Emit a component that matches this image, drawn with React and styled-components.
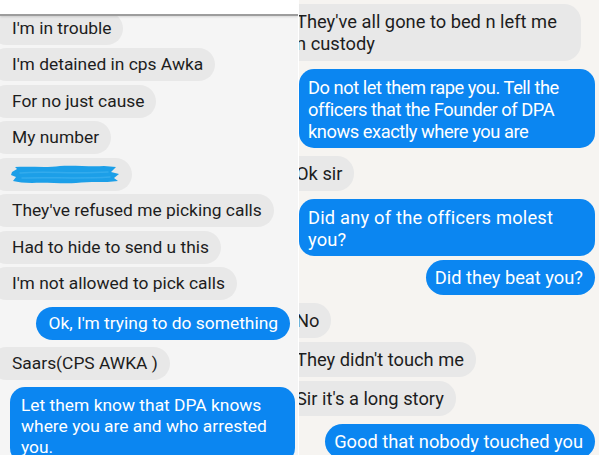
import React from "react";
import styled, { createGlobalStyle, css } from "styled-components";

const GlobalStyle = createGlobalStyle`
  html, body { margin: 0; padding: 0; background: #ffffff; }
  body { font-family: Roboto, "Noto Sans", "Liberation Sans", sans-serif; -webkit-font-smoothing: antialiased; }
`;

const Collage = styled.div`
  display: flex;
  gap: 1px;
  width: 599px;
  height: 462px;
  background: #ffffff;
  align-items: flex-start;
`;

const Shot = styled.section`
  display: flex;
  flex-direction: column;
  overflow: hidden;
  height: 455px;
  width: ${(p) => p.$width}px;
  background: ${(p) => p.$bg};
`;

const TopStrip = styled.div`
  flex: none;
  height: 14px;
  background: #ffffff;
  border-bottom: 2px solid #9d9d9d;
  box-shadow: 0 1px 2px rgba(0, 0, 0, 0.12);
  position: relative;
  z-index: 1;
`;

const Thread = styled.div`
  flex: 1;
  display: flex;
  flex-direction: column;
  overflow: hidden;
  padding-top: ${(p) => p.$top}px;
  margin-top: ${(p) => p.$shift || 0}px;
`;

const Bubble = styled.div`
  flex: none;
  box-sizing: border-box;
  font-size: ${(p) => (p.$big ? 18.3 : 17.4)}px;
  line-height: ${(p) => (p.$big ? 22 : 21)}px;
  letter-spacing: ${(p) => (p.$tight ? -0.45 : p.$loose ? 0.2 : 0)}px;
  font-variant-ligatures: none;
  padding: ${(p) => (p.$big ? 6.5 : 6)}px 12px;
  margin-top: ${(p) => (p.$first ? 0 : p.$switch ? (p.$big ? 8 : 7) : p.$big ? 4 : 3.5)}px;
  border-radius: 17px;
  white-space: nowrap;
  ${(p) =>
    p.$mine
      ? css`
          align-self: ${p.$wide ? "stretch" : "flex-end"};
          background: #0b86f1;
          color: #ffffff;
          margin-right: ${p.$edgeRight}px;
          margin-left: ${p.$wide ? p.$edgeLeft : 0}px;
          padding-left: ${p.$padLeft}px;
          padding-top: ${p.$lines > 1 ? 8 : p.$big ? 6.5 : 6}px;
          padding-bottom: ${p.$lines > 1 ? 5 : p.$big ? 6.5 : 6}px;
          border-radius: ${p.$lines > 1 ? 15 : 18}px;
        `
      : css`
          align-self: flex-start;
          background: #e8e8e8;
          color: #1d1d1d;
          margin-left: ${p.$cropLeft}px;
          padding-left: ${p.$padLeft}px;
          padding-right: ${p.$padRight ?? 12}px;
        `}
`;

const Scribble = styled.svg`
  display: block;
  width: 110px;
  height: 21px;
  margin-left: -2px;
`;

const leftMsgs = [
  { t: "I'm in trouble" },
  { t: "I'm detained in cps Awka" },
  { t: "For no just cause" },
  { t: "My number" },
  { scribble: true },
  { t: "They've refused me picking calls" },
  { t: "Had to hide to send u this" },
  { t: "I'm not allowed to pick calls" },
  { t: "Ok, I'm trying to do something", mine: true },
  { t: "Saars(CPS AWKA )" },
  {
    lines: ["Let them know that DPA knows", "where you are and who arrested", "you."],
    mine: true,
    wide: true,
  },
];

const rightMsgs = [
  { lines: ["They've all gone to bed n left me", "n custody"], padRight: 24 },
  {
    lines: ["Do not let them rape you. Tell the", "officers that the Founder of DPA", "knows exactly where you are"],
    mine: true,
    wide: true,
    tight: true,
  },
  { t: "Ok sir" },
  { lines: ["Did any of the officers molest", "you?"], mine: true, wide: true, loose: true },
  { t: "Did they beat you?", mine: true },
  { t: "No" },
  { t: "They didn't touch me" },
  { t: "Sir it's a long story" },
  { t: "Good that nobody touched you", mine: true },
];

function Content({ m }) {
  if (m.scribble) {
    return (
      <Scribble viewBox="0 0 110 21">
        <path
          d="M2 8 L 7 5 L 5 3 C 20 2, 36 4, 50 2 C 64 1, 80 3, 94 2 L 106 3 L 101 8 L 109 10 L 104 14 L 108 17 C 94 19, 80 17, 66 19 C 52 20, 36 18, 22 19 C 14 19, 8 18, 3 17 L 6 13 L 1 11 Z"
          fill="#1c9fe8"
        />
        <path
          d="M10 9 C 34 7, 62 10, 98 8 M12 14 C 40 13, 70 15, 100 13"
          stroke="#43b4f0"
          strokeWidth="1.5"
          strokeLinecap="round"
          fill="none"
          opacity="0.6"
        />
      </Scribble>
    );
  }
  if (m.lines) {
    return m.lines.map((l, i) => (
      <React.Fragment key={i}>
        {i > 0 && <br />}
        {l}
      </React.Fragment>
    ));
  }
  return m.t;
}

export default function App() {
  return (
    <>
      <GlobalStyle />
      <Collage>
        <Shot $width={298} $bg="#f5f5f5">
          <TopStrip />
          <Thread $top={0} $shift={-4.5}>
            {leftMsgs.map((m, i) => (
              <Bubble
                key={i}
                $first={i === 0}
                $switch={i > 0 && !!leftMsgs[i - 1].mine !== !!m.mine}
                $mine={m.mine}
                $wide={m.wide}
                $lines={m.lines ? m.lines.length : 1}
                $cropLeft={-10}
                $padLeft={m.mine ? (m.wide ? 11 : 12) : 22}
                $edgeRight={m.wide ? 3 : 8}
                $edgeLeft={10}
              >
                <Content m={m} />
              </Bubble>
            ))}
          </Thread>
        </Shot>
        <Shot $width={300} $bg="#f6f4f1">
          <Thread $top={4}>
            {rightMsgs.map((m, i) => (
              <Bubble
                key={i}
                $big
                $tight={m.tight}
                $loose={m.loose}
                $first={i === 0}
                $switch={i > 0 && !!rightMsgs[i - 1].mine !== !!m.mine}
                $mine={m.mine}
                $wide={m.wide}
                $lines={m.lines ? m.lines.length : 1}
                $cropLeft={-20}
                $padLeft={m.mine ? 9 : 17}
                $padRight={m.padRight}
                $edgeRight={4}
                $edgeLeft={0}
              >
                <Content m={m} />
              </Bubble>
            ))}
          </Thread>
        </Shot>
      </Collage>
    </>
  );
}
